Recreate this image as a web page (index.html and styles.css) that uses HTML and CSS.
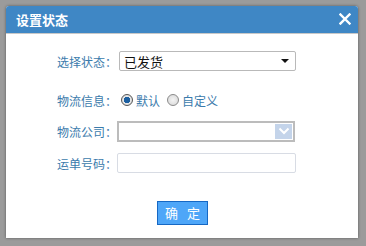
FILE: index.html
```html
<!DOCTYPE html>
<html lang="zh-CN">
<head>
  <meta charset="UTF-8">
  <title>设置状态</title>
  <link rel="stylesheet" href="styles.css">
</head>
<body>
  <!-- Dialog -->
  <div class="dialog">
    <div class="dialog-header">
      <span class="dialog-title">设置状态</span>
      <span class="dialog-close">
        <svg width="12" height="12" viewBox="0 0 12 12">
          <path d="M1.5 1.5 L10.5 10.5 M10.5 1.5 L1.5 10.5" stroke="#fff" stroke-width="2.4" stroke-linecap="square"/>
        </svg>
      </span>
    </div>

    <form class="dialog-body">
      <!-- Status -->
      <div class="form-row row-status">
        <label class="form-label">选择状态：</label>
        <div class="select-box">
          <span class="select-text">已发货</span>
          <span class="select-caret"></span>
        </div>
      </div>

      <!-- Logistics info -->
      <div class="form-row row-info">
        <label class="form-label">物流信息：</label>
        <span class="radio checked"></span>
        <span class="radio-text">默认</span>
        <span class="radio"></span>
        <span class="radio-text">自定义</span>
      </div>

      <!-- Company -->
      <div class="form-row row-company">
        <label class="form-label">物流公司：</label>
        <div class="combo-box">
          <span class="combo-btn">
            <svg width="12" height="8" viewBox="0 0 12 8">
              <path d="M1.5 1.5 L6 6 L10.5 1.5" fill="none" stroke="#fff" stroke-width="2"/>
            </svg>
          </span>
        </div>
      </div>

      <!-- Tracking number -->
      <div class="form-row row-number">
        <label class="form-label">运单号码：</label>
        <input type="text" class="text-input">
      </div>

      <div class="form-actions">
        <button type="button" class="submit-btn">确 定</button>
      </div>
    </form>
  </div>
</body>
</html>
```

FILE: styles.css
```css
/* Reset */
body, html {
  margin: 0;
  padding: 0;
  font-family: "Noto Sans CJK SC", "Liberation Sans", sans-serif;
}

body {
  background-color: #9b9b9b;
  width: 366px;
  height: 246px;
  padding: 6px 0 0 6px;
  box-sizing: border-box;
}

/* Dialog */
.dialog {
  width: 352px;
  height: 232px;
  background-color: #fff;
  border-radius: 3px 3px 0 0;
  box-shadow: 0 0 3px rgba(0, 0, 0, 0.45);
  display: flex;
  flex-direction: column;
}

.dialog-header {
  height: 27px;
  background-color: #3f87c5;
  border-radius: 3px 3px 0 0;
  border-bottom: 1px solid #c8c8c8;
  display: flex;
  align-items: center;
  justify-content: space-between;
  padding: 0 6px 0 10px;
}

.dialog-title {
  color: #fff;
  font-size: 13px;
  font-weight: bold;
}

.dialog-close {
  display: flex;
  width: 14px;
  height: 14px;
  align-items: center;
  justify-content: center;
  margin-top: -1px;
}

.dialog-body {
  margin: 0;
  padding: 17px 0 0 51px;
  display: flex;
  flex-direction: column;
}

.form-row {
  display: flex;
  align-items: center;
  height: 20px;
}

.row-info { margin-top: 19px; }
.row-company { margin-top: 11px; }
.row-number { margin-top: 12px; }

.form-label {
  width: 60px;
  font-size: 12px;
  font-family: "Noto Sans CJK TC", "Noto Sans CJK SC", sans-serif;
  color: #3b7bac;
  white-space: nowrap;
}

/* Status select */
.select-box {
  box-sizing: border-box;
  margin-left: 2px;
  width: 177px;
  height: 20px;
  border: 1px solid #b9b9b9;
  border-radius: 2px;
  display: flex;
  align-items: center;
  justify-content: space-between;
  padding: 0 6px 0 4px;
}

.select-text {
  font-size: 13px;
  color: #111;
}

.select-caret {
  width: 0;
  height: 0;
  border-left: 4px solid transparent;
  border-right: 4px solid transparent;
  border-top: 4px solid #111;
}

/* Radios */
.radio {
  width: 10px;
  height: 10px;
  border-radius: 50%;
  border: 1px solid #8a8a8a;
  background: radial-gradient(circle, #f4f4f4 0, #d6d6d6 100%);
  margin-left: 4px;
}

.radio.checked {
  background: radial-gradient(circle, #1b5fa0 0, #1b5fa0 3px, #e8e8e8 3.5px, #cfcfcf 100%);
  border-color: #555;
}

.radio-text {
  font-size: 12px;
  color: #3b7bac;
  margin-left: 3px;
  margin-right: 3px;
}

/* Company combo */
.combo-box {
  box-sizing: border-box;
  width: 178px;
  height: 21px;
  border: 2px solid #bcbcbc;
  display: flex;
  justify-content: flex-end;
  align-items: center;
  padding-right: 1px;
}

.combo-btn {
  width: 17px;
  height: 15px;
  background-color: #c4d4ea;
  display: flex;
  align-items: center;
  justify-content: center;
}

/* Number input */
.text-input {
  width: 179px;
  height: 20px;
  box-sizing: border-box;
  border: 1px solid #d8dce4;
  border-radius: 2px;
  margin: 0;
  font-size: 12px;
}

/* Button */
.form-actions {
  margin-top: 26px;
  padding-left: 100px;
}

.submit-btn {
  width: 51px;
  height: 24px;
  background-color: #4ea6f8;
  border: 1px solid #1668c4;
  color: #fff;
  font-size: 13px;
  letter-spacing: 3px;
  text-indent: 3px;
  font-family: "Noto Sans CJK SC", sans-serif;
  padding: 0;
  cursor: pointer;
}
```
